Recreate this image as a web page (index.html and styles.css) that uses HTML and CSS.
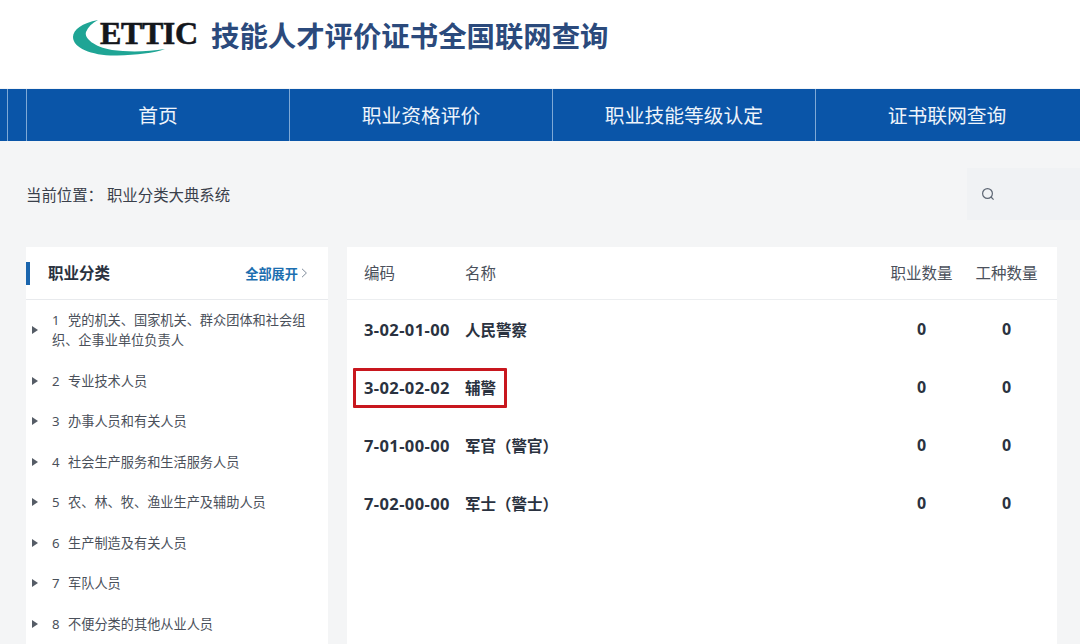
FILE: index.html
```html
<!DOCTYPE html>
<html lang="zh-CN">
<head>
    <meta charset="UTF-8">
    <title>技能人才评价证书全国联网查询</title>
    <link rel="stylesheet" href="styles.css">
</head>
<body>

    <header class="site-header">
        <div class="logo">
            <svg class="logo-swoosh" width="100" height="40" viewBox="0 0 100 40">
                <path d="M26 2 C10 5 1 12 1 19 C1 30 20 38 45 37.5 C65 37 82 35 93 31 C75 34 55 34 40 32 C22 29 12 20 14 14 C16 9 20 5 26 2 Z" fill="#1fa595"/>
            </svg>
            <span class="logo-text">ETTIC</span>
        </div>
        <h1 class="site-title">技能人才评价证书全国联网查询</h1>
    </header>

    <nav class="main-nav">
        <span class="nav-stub"></span>
        <span class="nav-stub"></span>
        <a class="nav-item">首页</a>
        <a class="nav-item">职业资格评价</a>
        <a class="nav-item">职业技能等级认定</a>
        <a class="nav-item nav-item-last">证书联网查询</a>
    </nav>

    <div class="crumb-bar">
        <p class="crumb">当前位置：&nbsp;职业分类大典系统</p>
        <div class="search-box">
            <svg width="14" height="14" viewBox="0 0 14 14" fill="none" stroke="#5d6673" stroke-width="1.2">
                <circle cx="6.5" cy="6.5" r="4.9"/>
                <path d="M10 10 L12.6 12.6"/>
            </svg>
        </div>
    </div>

    <div class="content">
        <aside class="side-card">
            <div class="side-head">
                <h2 class="side-title">职业分类</h2>
                <a class="expand-all">全部展开<svg width="7" height="10" viewBox="0 0 7 10" fill="none" stroke="#7f8c9b" stroke-width="1"><path d="M1 0.8 L5.4 5 L1 9.2"/></svg></a>
            </div>
            <ul class="side-list">
                <li><span class="arrow"></span><span>1&nbsp;&nbsp;党的机关、国家机关、群众团体和社会组织、企事业单位负责人</span></li>
                <li><span class="arrow"></span><span>2&nbsp;&nbsp;专业技术人员</span></li>
                <li><span class="arrow"></span><span>3&nbsp;&nbsp;办事人员和有关人员</span></li>
                <li><span class="arrow"></span><span>4&nbsp;&nbsp;社会生产服务和生活服务人员</span></li>
                <li><span class="arrow"></span><span>5&nbsp;&nbsp;农、林、牧、渔业生产及辅助人员</span></li>
                <li><span class="arrow"></span><span>6&nbsp;&nbsp;生产制造及有关人员</span></li>
                <li><span class="arrow"></span><span>7&nbsp;&nbsp;军队人员</span></li>
                <li><span class="arrow"></span><span>8&nbsp;&nbsp;不便分类的其他从业人员</span></li>
            </ul>
        </aside>

        <main class="table-card">
            <div class="row row-head">
                <span>编码</span>
                <span>名称</span>
                <span class="num">职业数量</span>
                <span class="num">工种数量</span>
            </div>
            <div class="row">
                <span class="code">3-02-01-00</span>
                <span>人民警察</span>
                <span class="num zero">0</span>
                <span class="num zero">0</span>
            </div>
            <div class="row row-marked">
                <span class="code">3-02-02-02</span>
                <span>辅警</span>
                <span class="num zero">0</span>
                <span class="num zero">0</span>
            </div>
            <div class="row">
                <span class="code">7-01-00-00</span>
                <span>军官（警官）</span>
                <span class="num zero">0</span>
                <span class="num zero">0</span>
            </div>
            <div class="row">
                <span class="code">7-02-00-00</span>
                <span>军士（警士）</span>
                <span class="num zero">0</span>
                <span class="num zero">0</span>
            </div>
        </main>
    </div>

</body>
</html>
```

FILE: styles.css
```css
body {
    margin: 0;
    height: 644px;
    overflow: hidden;
    background-color: #f4f5f6;
    font-family: "Noto Sans", "Noto Sans CJK SC", sans-serif;
    color: #333a47;
}
.site-header {
    height: 88px;
    background: white;
    display: flex;
    align-items: center;
    padding: 5px 0 17px 72px;
    box-sizing: border-box;
}
.logo {
    position: relative;
    width: 126px;
    height: 40px;
    flex-shrink: 0;
}
.logo-swoosh {
    position: absolute;
    left: 0;
    top: 0;
}
.logo-text {
    position: absolute;
    left: 28px;
    top: -3px;
    font-family: "Liberation Serif", serif;
    font-weight: bold;
    font-size: 32px;
    line-height: 36px;
    letter-spacing: -0.4px;
    color: #14171c;
    -webkit-text-stroke: 0.6px #14171c;
    white-space: nowrap;
}
.site-title {
    margin: 0 0 5px 13px;
    font-size: 28.4px;
    line-height: 36px;
    font-weight: bold;
    color: #2b4a7c;
    white-space: nowrap;
}
.main-nav {
    height: 52px;
    margin-top: 1px;
    background-color: #0a55a8;
    display: grid;
    grid-template-columns: 8px 19px 263px 263px 263px 1fr;
}
.nav-stub {
    border-right: 1px solid #7fa9d6;
}
.nav-item {
    border-right: 1px solid #7fa9d6;
    padding-top: 2px;
    color: #eef4fb;
    font-size: 19.8px;
    line-height: 50px;
    text-align: center;
}
.nav-item-last {
    border-right: none;
    padding-right: 2px;
}
.crumb-bar {
    height: 106px;
    display: flex;
    align-items: center;
    justify-content: space-between;
    padding-left: 26px;
}
.crumb {
    margin: 0;
    font-size: 15.4px;
    color: #3a404b;
}
.search-box {
    width: 113px;
    height: 52px;
    background-color: #f0f2f4;
    display: flex;
    align-items: center;
    padding-left: 14px;
    box-sizing: border-box;
}
.content {
    display: flex;
    align-items: flex-start;
    padding-left: 26px;
}
.side-card {
    width: 302px;
    height: 420px;
    background: white;
}
.side-head {
    height: 52px;
    border-bottom: 1px solid #e8eaed;
    display: flex;
    align-items: center;
    justify-content: space-between;
    padding-right: 20px;
}
.side-title {
    margin: 0;
    border-left: 4px solid #1a65ad;
    padding-left: 18px;
    font-size: 15.5px;
    line-height: 23px;
    font-weight: bold;
    color: #2a3240;
}
.expand-all {
    display: flex;
    align-items: center;
    gap: 3px;
    font-size: 13.2px;
    font-weight: bold;
    color: #1d6fb0;
}
.side-list {
    list-style: none;
    margin: 0;
    padding: 0;
}
.side-list li {
    display: flex;
    align-items: center;
    padding: 10.25px 18px 10.25px 6px;
    font-size: 13.2px;
    line-height: 20px;
    word-spacing: 0.8px;
    color: #4a505a;
}
.arrow {
    flex-shrink: 0;
    width: 0;
    height: 0;
    margin-right: 14px;
    border-left: 6px solid #555c66;
    border-top: 4px solid transparent;
    border-bottom: 4px solid transparent;
}
.table-card {
    width: 710px;
    height: 420px;
    margin-left: 19px;
    background: white;
}
.row {
    display: grid;
    grid-template-columns: 101px 1fr 85px 85px;
    align-items: center;
    height: 58px;
    padding: 0 8px 0 17px;
    font-size: 15.5px;
    font-weight: bold;
    color: #2a3240;
}
.row-head {
    height: 51px;
    padding-bottom: 1px;
    border-bottom: 1px solid #eceef0;
    font-weight: normal;
    color: #4b515c;
}
.code {
    font-size: 16.5px;
    letter-spacing: 0.4px;
    white-space: nowrap;
}
.zero {
    font-size: 16px;
}
.num {
    text-align: center;
}
.row-marked {
    position: relative;
}
.row-marked::after {
    content: "";
    position: absolute;
    left: 6px;
    top: 10px;
    width: 148px;
    height: 34px;
    border: 3px solid #c8171e;
    border-radius: 1px;
}
```
